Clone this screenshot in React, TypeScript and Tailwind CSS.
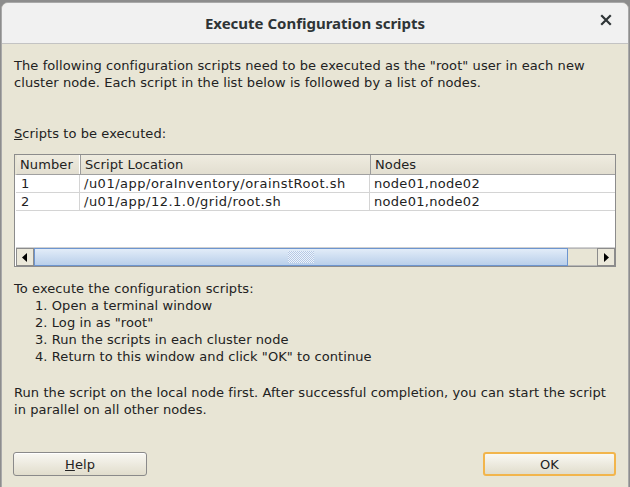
import React from "react";

const font = { fontFamily: '"DejaVu Sans", sans-serif' };

function Grip() {
  return (
    <div
      className="w-[26px] h-[12px]"
      style={{
        background: "repeating-conic-gradient(#b3c8e6 0 25%, #eef3fa 0 50%) 0 0 / 2px 2px",
      }}
    />
  );
}

export default function App() {
  const rows = [
    ["1", "/u01/app/oraInventory/orainstRoot.sh", "node01,node02"],
    ["2", "/u01/app/12.1.0/grid/root.sh", "node01,node02"],
  ];
  return (
    <div className="w-[630px] h-[487px] bg-[#8d8d8d] overflow-hidden" style={font}>
      <div className="ml-[1px] mt-[2px] w-[628px] h-[486px] rounded-t-[7px] border border-[#a9a9a9] bg-[#e8e5d5] flex flex-col overflow-hidden">
        {/* title bar */}
        <div className="h-[41px] shrink-0 bg-[#f1f1f1] border-b border-[#c3c3c3] flex items-center relative">
          <div
            className="flex-1 text-center text-[15px] font-bold text-[#2e3436]"
            style={{ fontFamily: '"Noto Sans", sans-serif' }}
          >
            Execute Configuration scripts
          </div>
          <div className="absolute right-[16px] top-[11px] text-[#2e3436]">
            <svg width="12" height="12" viewBox="0 0 12 12">
              <path d="M2 2 L10 10 M10 2 L2 10" stroke="#2e3436" strokeWidth="2.2" strokeLinecap="square" />
            </svg>
          </div>
        </div>

        {/* body */}
        <div className="flex-1 flex flex-col px-[12px] pt-[13px] text-[13px] leading-[17px] tracking-[0.08px] text-[#222]">
          <p>
            The following configuration scripts need to be executed as the "root" user in each new
            <br />
            cluster node. Each script in the list below is followed by a list of nodes.
          </p>
          <p className="mt-[34px]">
            <span className="underline">S</span>cripts to be executed:
          </p>

          {/* table */}
          <div className="mt-[12px] h-[113px] border border-[#8c8c8c] bg-white flex flex-col tracking-[0.3px]">
            <div className="h-[20px] flex border-b border-[#a0a0a0] bg-gradient-to-b from-[#efece0] to-[#e2ded0] border-l-2 border-l-[#e8e5d5] tracking-[0.1px]">
              <div className="w-[64px] pl-[3px] border-r border-[#9c9c9c] shadow-[inset_-1px_0_0_#fff] flex items-center">Number</div>
              <div className="w-[290px] pl-[4px] border-r border-[#9c9c9c] flex items-center">Script Location</div>
              <div className="flex-1 pl-[4px] flex items-center">Nodes</div>
            </div>
            {rows.map((r) => (
              <div key={r[0]} className="h-[18px] flex border-b border-[#d4d4d4] ml-[1px]">
                <div className="w-[64px] pl-[5px] border-r border-[#d4d4d4] flex items-center">{r[0]}</div>
                <div className="w-[290px] pl-[4px] border-r border-[#d4d4d4] flex items-center tracking-[0.5px]">{r[1]}</div>
                <div className="flex-1 pl-[4px] flex items-center">{r[2]}</div>
              </div>
            ))}
            <div className="flex-1" />
            {/* scrollbar */}
            <div className="h-[19px] flex bg-[#e8e5d5] border-t border-[#d0d0d0] ml-[1px]">
              <div className="w-[18px] border border-[#8c8c8c] bg-[#ebe8da] flex items-center justify-center">
                <svg width="6" height="9" viewBox="0 0 6 9"><path d="M5 0 L0 4.5 L5 9 Z" fill="#000" /></svg>
              </div>
              <div className="w-[534px] border border-[#6d95cf] bg-gradient-to-b from-[#e2ecf8] to-[#b9cfea] flex items-center justify-center">
                <Grip />
              </div>
              <div className="flex-1 border-y border-[#b8b8b8] bg-[#e8e5d5]" />
              <div className="w-[18px] border border-[#8c8c8c] bg-[#ebe8da] flex items-center justify-center">
                <svg width="6" height="9" viewBox="0 0 6 9"><path d="M1 0 L6 4.5 L1 9 Z" fill="#000" /></svg>
              </div>
            </div>
          </div>

          <p className="mt-[13px]">To execute the configuration scripts:</p>
          <ol className="pl-[21px]">
            <li>1. Open a terminal window</li>
            <li>2. Log in as "root"</li>
            <li>3. Run the scripts in each cluster node</li>
            <li>4. Return to this window and click "OK" to continue</li>
          </ol>
          <p className="mt-[19px]">
            Run the script on the local node first. After successful completion, you can start the script
            <br />
            in parallel on all other nodes.
          </p>

          <div className="flex-1" />
          <div className="flex justify-between items-center pb-[11px] -ml-[1px]">
            <button className="w-[134px] h-[24px] rounded-[3px] border border-[#8a8a8a] bg-gradient-to-b from-[#f9f8f3] to-[#e1ddcc] shadow-[inset_0_1px_0_#fff] text-[13px]">
              <span className="underline">H</span>elp
            </button>
            <button className="w-[133px] h-[24px] rounded-[3px] border-2 border-[#f2b54c] bg-gradient-to-b from-[#f9f8f3] to-[#e1ddcc] text-[13px]">
              OK
            </button>
          </div>
        </div>
      </div>
    </div>
  );
}
